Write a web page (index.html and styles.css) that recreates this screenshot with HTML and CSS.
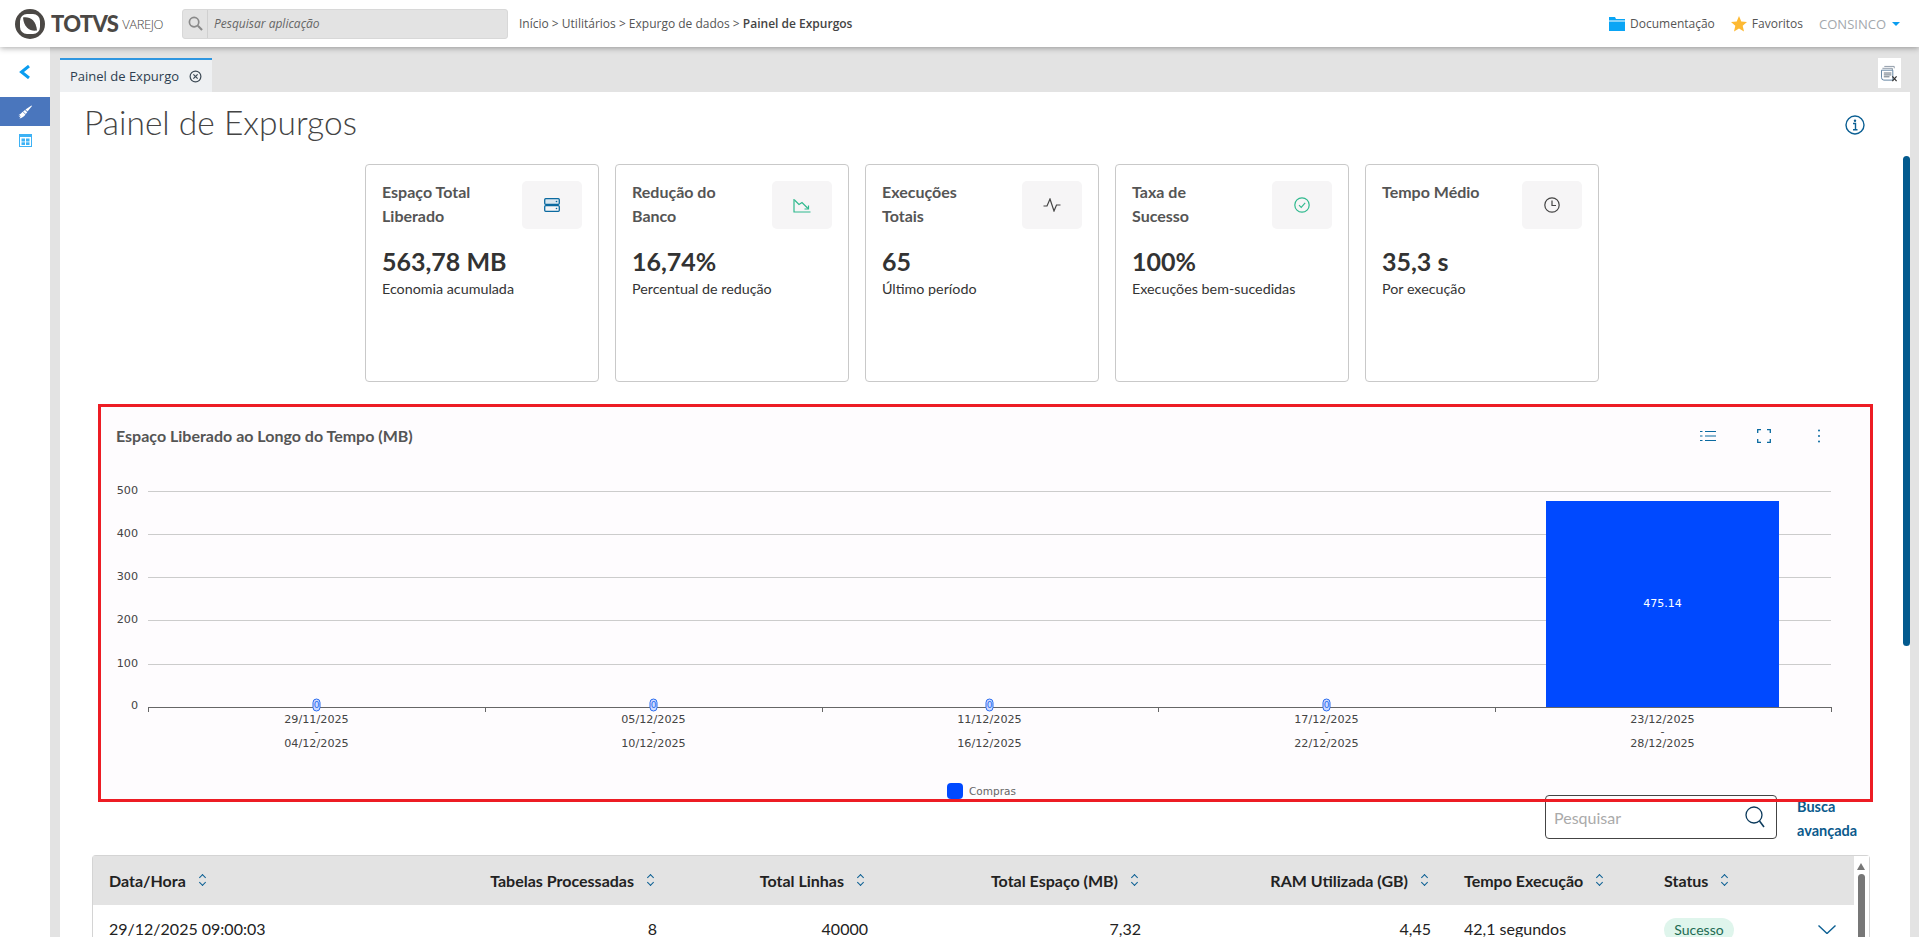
FILE: index.html
```html
<!DOCTYPE html>
<html lang="pt-BR">
<head>
<meta charset="utf-8">
<title>Painel de Expurgos</title>
<link rel="stylesheet" href="styles.css">
</head>
<body>
<header class="topbar">
  <div class="brand">
    <svg class="logo-mark" viewBox="0 0 30 30" aria-hidden="true">
      <circle cx="15" cy="15" r="15" fill="#4b4845"/>
      <rect x="5" y="5" width="20" height="20" rx="7" fill="#fff"/>
      <path d="M8 8.500 C15 7.500 21 11 22 21.500 C15 22.500 9 19 8 8.500Z" fill="#4b4845"/>
    </svg>
    <span class="brand-name">TOTVS</span>
    <span class="brand-sub">VAREJO</span>
  </div>
  <div class="app-search">
    <span class="app-search-icon">
      <svg viewBox="0 0 16 16" width="15" height="15" aria-hidden="true"><circle cx="6.500" cy="6.500" r="5" fill="none" stroke="#8a8a8a" stroke-width="1.800"/><path d="M10.500 10.500 L15 15" stroke="#8a8a8a" stroke-width="2.200"/></svg>
    </span>
    <span class="app-search-text">Pesquisar aplicação</span>
  </div>
  <nav class="crumbs">Início &gt; Utilitários &gt; Expurgo de dados &gt; <b>Painel de Expurgos</b></nav>
  <div class="top-links">
    <svg class="top-icon" viewBox="0 0 16 14" width="16" height="14" aria-hidden="true"><path d="M0 0H6L7 2H16V3.500H0Z M0 4.500H16V14H0Z" fill="#0aa5f5"/></svg>
    <span class="top-link gap-doc">Documentação</span>
    <svg class="top-icon" viewBox="0 0 16 16" width="16" height="16" aria-hidden="true"><path d="M8 0 L10.300 5.400 L16 5.900 L11.700 9.700 L13 15.500 L8 12.400 L3 15.500 L4.300 9.700 L0 5.900 L5.700 5.400Z" fill="#fdb933"/></svg>
    <span class="top-link gap-fav">Favoritos</span>
    <span class="top-user">CONSINCO</span>
    <span class="caret"></span>
  </div>
</header>

<div class="shell">
  <aside class="sidebar">
    <div class="side-back">
      <svg viewBox="0 0 12 14" width="12" height="14" aria-hidden="true"><path d="M10 1 L2.500 7 L10 13" fill="none" stroke="#0a9df0" stroke-width="3"/></svg>
    </div>
    <div class="side-item active">
      <svg viewBox="0 0 14 14" width="14" height="14" aria-hidden="true"><path d="M13.500 0.500 L14 1 L9.500 6.500 L7.500 4.500Z M7 5 L9.200 7.200 L7.800 9 L5 6.500Z M4.600 6.800 L7.500 9.400 C6 11.500 4 12.800 1.500 13.500 L2.800 11.300 L0.800 12 L2.200 10 L0.300 10.200 C2 9.500 3.500 8.300 4.600 6.800Z" fill="#fff"/></svg>
    </div>
    <div class="side-item">
      <svg viewBox="0 0 13 13" width="13" height="13" aria-hidden="true"><rect x="0" y="0" width="13" height="13" fill="#3db2f5"/><rect x="1" y="3" width="11" height="9" fill="#fff"/><rect x="2.500" y="4.500" width="3.500" height="3" fill="#3db2f5"/><rect x="7" y="4.500" width="3.500" height="3" fill="#3db2f5"/><rect x="2.500" y="8.300" width="3.500" height="2.700" fill="#3db2f5"/><rect x="7" y="8.300" width="3.500" height="2.700" fill="#3db2f5"/></svg>
    </div>
  </aside>

  <div class="workspace">
    <div class="tabbar">
      <div class="tab">
        <span>Painel de Expurgo</span>
        <svg viewBox="0 0 14 14" width="13" height="13" aria-hidden="true"><circle cx="7" cy="7" r="5.800" fill="none" stroke="#3d4a55" stroke-width="1.300"/><path d="M4.700 4.700 L9.300 9.300 M9.300 4.700 L4.700 9.300" stroke="#3d4a55" stroke-width="1.300"/></svg>
      </div>
      <div class="tab-tool">
        <svg viewBox="0 0 18 18" width="17" height="17" aria-hidden="true"><path d="M3.500 1.500H14V3.500" fill="none" stroke="#8b97a5"/><path d="M1.500 3.500H12V5.500" fill="none" stroke="#8b97a5"/><path d="M0.500 5.500H12.500V16H3 Q0.500 16 0.500 13Z" fill="none" stroke="#5c7f9f"/><path d="M3 8.500H11M3 10.500H11M3 12.500H9" stroke="#5c6a78"/><path d="M12 12 L16.500 17 M16.500 12 L12 17" stroke="#333" stroke-width="1.300"/></svg>
      </div>
    </div>

    <main class="content">
      <div class="page-head">
        <h1 class="page-title">Painel de Expurgos</h1>
        <svg viewBox="0 0 20 20" width="20" height="20" aria-hidden="true"><circle cx="10" cy="10" r="9" fill="none" stroke="#0b5f93" stroke-width="1.400"/><circle cx="10" cy="5.800" r="1.200" fill="#0b5f93"/><path d="M8 8.500H10.500V14.500M8 14.800H12.500" fill="none" stroke="#0b5f93" stroke-width="1.400"/></svg>
      </div>

      <section class="cards">
        <article class="card">
          <div class="card-head"><h2 class="card-title">Espaço Total Liberado</h2>
            <span class="card-icon"><svg viewBox="0 0 16 14" width="16" height="14" aria-hidden="true"><rect x="0.700" y="0.700" width="14.600" height="5.600" rx="1" fill="#dbe7ef" stroke="#0b6aa0" stroke-width="1.300"/><rect x="0.700" y="7.700" width="14.600" height="5.600" rx="1" fill="none" stroke="#0b6aa0" stroke-width="1.300"/><circle cx="12.500" cy="3.500" r=".8" fill="#0b6aa0"/><circle cx="12.500" cy="10.500" r=".8" fill="#0b6aa0"/></svg></span></div>
          <div class="card-value">563,78 MB</div>
          <div class="card-sub">Economia acumulada</div>
        </article>
        <article class="card">
          <div class="card-head"><h2 class="card-title">Redução do Banco</h2>
            <span class="card-icon"><svg viewBox="0 0 18 15" width="18" height="15" aria-hidden="true"><path d="M1 1V14H17.500" fill="none" stroke="#2fb98e" stroke-width="1.200"/><path d="M1.500 2 L6 6.500 L9 4.500 L15 10.500" fill="none" stroke="#2fb98e" stroke-width="1.200"/><path d="M11.500 11 H15.500 V7.500" fill="none" stroke="#2fb98e" stroke-width="1.200"/></svg></span></div>
          <div class="card-value">16,74%</div>
          <div class="card-sub">Percentual de redução</div>
        </article>
        <article class="card">
          <div class="card-head"><h2 class="card-title">Execuções Totais</h2>
            <span class="card-icon"><svg viewBox="0 0 18 14" width="18" height="14" aria-hidden="true"><path d="M0.500 8H4L7 1L11 13L13.500 7H17.500" fill="none" stroke="#444" stroke-width="1.200"/></svg></span></div>
          <div class="card-value">65</div>
          <div class="card-sub">Último período</div>
        </article>
        <article class="card">
          <div class="card-head"><h2 class="card-title">Taxa de Sucesso</h2>
            <span class="card-icon"><svg viewBox="0 0 16 16" width="16" height="16" aria-hidden="true"><circle cx="8" cy="8" r="7.200" fill="none" stroke="#2fb98e" stroke-width="1.200"/><path d="M5 8.200L7.200 10.400L11.200 5.800" fill="none" stroke="#2fb98e" stroke-width="1.100"/></svg></span></div>
          <div class="card-value">100%</div>
          <div class="card-sub">Execuções bem-sucedidas</div>
        </article>
        <article class="card">
          <div class="card-head"><h2 class="card-title">Tempo Médio</h2>
            <span class="card-icon"><svg viewBox="0 0 16 16" width="16" height="16" aria-hidden="true"><circle cx="8" cy="8" r="7.200" fill="none" stroke="#444" stroke-width="1.200"/><path d="M8 3.500V8.500H12" fill="none" stroke="#444" stroke-width="1.200"/></svg></span></div>
          <div class="card-value">35,3 s</div>
          <div class="card-sub">Por execução</div>
        </article>
      </section>

      <section class="chart-frame">
        <div class="chart-head">
          <h2 class="chart-title">Espaço Liberado ao Longo do Tempo (MB)</h2>
          <div class="chart-tools">
            <svg viewBox="0 0 16 12" width="16" height="12" aria-hidden="true"><path d="M5 1.500H16M5 6H16M5 10.500H16" stroke="#0b6aa0" stroke-width="1.200"/><path d="M0 1.500H2.500M0 6H2.500M0 10.500H2.500" stroke="#0b6aa0" stroke-width="1.200"/></svg>
            <svg viewBox="0 0 14 14" width="14" height="14" aria-hidden="true"><path d="M0.700 4V0.700H4M10 0.700H13.300V4M13.300 10V13.300H10M4 13.300H0.700V10" fill="none" stroke="#0b6aa0" stroke-width="1.300"/></svg>
            <svg class="tool-more" viewBox="0 0 4 14" width="4" height="14" aria-hidden="true"><circle cx="2" cy="1.500" r="1" fill="#0b6aa0"/><circle cx="2" cy="7" r="1" fill="#0b6aa0"/><circle cx="2" cy="12.500" r="1" fill="#0b6aa0"/></svg>
          </div>
        </div>
        <svg class="chart-svg" viewBox="0 0 1769 346" width="1769" height="346" role="img" aria-label="Espaço Liberado ao Longo do Tempo">
          <g class="grid">
            <path d="M47 23.500H1730M47 66.500H1730M47 109.500H1730M47 152.500H1730M47 196.500H1730"/>
          </g>
          <g class="y-labels">
            <text x="37" y="23">500</text><text x="37" y="66">400</text><text x="37" y="109">300</text><text x="37" y="152">200</text><text x="37" y="196">100</text><text x="37" y="238">0</text>
          </g>
          <rect class="bar" x="1445" y="33" width="233" height="206"/>
          <text class="bar-label" x="1561.500" y="136">475.14</text>
          <path class="axis" d="M47 239.500H1731M47.500 239.500V244M384.500 239.500V244M721.500 239.500V244M1057.500 239.500V244M1394.500 239.500V244M1730.500 239.500V244"/>
          <g class="zero-pills">
            <rect x="212" y="231" width="7" height="12" rx="3.500"/><rect x="549" y="231" width="7" height="12" rx="3.500"/><rect x="885" y="231" width="7" height="12" rx="3.500"/><rect x="1222" y="231" width="7" height="12" rx="3.500"/>
          </g>
          <g class="zero-text">
            <text x="215.500" y="237">0</text><text x="552.500" y="237">0</text><text x="888.500" y="237">0</text><text x="1225.500" y="237">0</text>
          </g>
          <g class="x-labels">
            <text x="215.500" y="252">29/11/2025</text><text x="215.500" y="264">-</text><text x="215.500" y="276">04/12/2025</text>
            <text x="552.500" y="252">05/12/2025</text><text x="552.500" y="264">-</text><text x="552.500" y="276">10/12/2025</text>
            <text x="888.500" y="252">11/12/2025</text><text x="888.500" y="264">-</text><text x="888.500" y="276">16/12/2025</text>
            <text x="1225.500" y="252">17/12/2025</text><text x="1225.500" y="264">-</text><text x="1225.500" y="276">22/12/2025</text>
            <text x="1561.500" y="252">23/12/2025</text><text x="1561.500" y="264">-</text><text x="1561.500" y="276">28/12/2025</text>
          </g>
        </svg>
        <div class="legend"><span class="legend-swatch"></span><span>Compras</span></div>
      </section>

      <div class="table-tools">
        <div class="table-search">
          <span>Pesquisar</span>
          <svg viewBox="0 0 20 22" width="20" height="22" aria-hidden="true"><circle cx="9" cy="9" r="8" fill="none" stroke="#0b3a5c" stroke-width="1.300"/><path d="M14.500 15 L19 21" stroke="#0b3a5c" stroke-width="1.500"/></svg>
        </div>
        <a class="adv-link">Busca avançada</a>
      </div>

      <section class="table-box">
        <div class="table-scroll">
          <div class="t-row t-head">
            <div class="c c-date">Data/Hora<i class="sort"></i></div>
            <div class="c c-tab">Tabelas Processadas<i class="sort"></i></div>
            <div class="c c-lin">Total Linhas<i class="sort"></i></div>
            <div class="c c-esp">Total Espaço (MB)<i class="sort"></i></div>
            <div class="c c-ram">RAM Utilizada (GB)<i class="sort"></i></div>
            <div class="c c-tem">Tempo Execução<i class="sort"></i></div>
            <div class="c c-sta">Status<i class="sort"></i></div>
          </div>
          <div class="t-row t-body">
            <div class="c c-date">29/12/2025 09:00:03</div>
            <div class="c c-tab num">8</div>
            <div class="c c-lin num">40000</div>
            <div class="c c-esp num">7,32</div>
            <div class="c c-ram num">4,45</div>
            <div class="c c-tem">42,1 segundos</div>
            <div class="c c-sta"><span class="badge">Sucesso</span></div>
            <svg class="row-chevron" viewBox="0 0 18 9" width="18" height="9" aria-hidden="true"><path d="M0.500 0.500L9 8.500L17.500 0.500" fill="none" stroke="#0b5f93" stroke-width="1.400"/></svg>
          </div>
        </div>
        <div class="table-bar"><span class="bar-up"></span><span class="bar-thumb"></span></div>
      </section>
    </main>
    <div class="page-scroll"></div>
  </div>
</div>
</body>
</html>
```

FILE: styles.css
```css
* { box-sizing: border-box; }
html, body { margin: 0; height: 100%; overflow: hidden; }
body { font-family: "Open Sans", "Liberation Sans", sans-serif; background: #e3e3e3; color: #333; width: 1919px; height: 937px; }

.topbar { height: 47px; background: #fff; display: flex; align-items: center; box-shadow: 0 1px 6px rgba(0,0,0,.35); position: relative; z-index: 3; padding-left: 15px; }
.brand { display: flex; align-items: center; width: 167px; flex: none; }
.logo-mark { width: 30px; height: 30px; flex: none; }
.brand-name { font-family: Lato, sans-serif; font-weight: 900; font-size: 22px; color: #4b4845; margin-left: 6px; letter-spacing: -.7px; }
.brand-sub { font-family: "Open Sans", sans-serif; font-weight: 300; font-size: 13px; color: #4b4845; margin-left: 4px; letter-spacing: -.4px; }
.app-search { width: 326px; height: 30px; background: #e3e3e3; border: 1px solid #d8d8d8; border-radius: 3px; display: flex; align-items: center; flex: none; }
.app-search-icon { width: 25px; height: 100%; border-right: 1px solid #d0d0d0; display: flex; align-items: center; justify-content: center; }
.app-search-text { font-style: italic; font-size: 12px; color: #666; margin-left: 6px; }
.crumbs { margin-left: 11px; font-size: 12px; color: #555; white-space: nowrap; }
.crumbs b { font-weight: 600; color: #444; }
.top-links { margin-left: auto; display: flex; align-items: center; padding-right: 19px; font-size: 12px; }
.top-link { color: #555; }
.gap-doc { margin: 0 16px 0 5px; }
.gap-fav { margin: 0 16px 0 5px; }
.top-user { color: #a3a8ad; font-size: 13px; }
.caret { width: 0; height: 0; border-left: 4px solid transparent; border-right: 4px solid transparent; border-top: 4px solid #0a9df0; margin-left: 6px; }

.shell { display: flex; height: 890px; }
.sidebar { width: 50px; background: #fff; flex: none; }
.side-back { height: 50px; display: flex; align-items: center; justify-content: center; }
.side-item { height: 29px; display: flex; align-items: center; justify-content: center; }
.side-item.active { background: #4a76bd; }

.workspace { margin-left: 10px; flex: 1; min-width: 0; display: flex; flex-direction: column; position: relative; padding-right: 9px; }
.tabbar { height: 45px; padding-top: 11px; display: flex; justify-content: space-between; flex: none; }
.tab { width: 152px; height: 34px; background: #eef0f2; border-top: 2px solid #2e96e0; display: flex; align-items: center; justify-content: space-between; padding: 0 10px 0 10px; font-size: 13px; color: #2d3e50; }
.tab-tool { width: 23px; height: 30px; background: #fff; margin-right: 9px; display: flex; align-items: center; justify-content: center; }

.content { flex: 1; background: #fff; position: relative; min-height: 0; overflow: hidden; }
.page-head { height: 72px; padding: 0 45px 12px 24px; display: flex; justify-content: space-between; align-items: center; }
.page-head svg { margin-top: 6px; }
.page-title { margin: 0; font-family: Lato, sans-serif; font-weight: 300; font-size: 33.500px; color: #444; }

.cards { display: flex; gap: 16px; padding-left: 305px; font-family: Lato, sans-serif; }
.card { width: 234px; height: 218px; border: 1px solid #c9c9c9; border-radius: 4px; padding: 16px; }
.card-head { display: flex; justify-content: space-between; align-items: flex-start; height: 48px; }
.card-title { margin: -1px 0 0; width: 100px; font-size: 16px; font-weight: 700; line-height: 24px; color: #555; }
.card-icon { width: 60px; height: 48px; background: #f6f5f6; border-radius: 5px; display: flex; align-items: center; justify-content: center; flex: none; }
.card-value { font-size: 25px; font-weight: 700; line-height: 32px; margin-top: 16px; color: #333; }
.card-sub { font-size: 14.300px; line-height: 22px; margin-top: 1px; color: #333; }

.chart-frame { position: relative; margin: 22px 37px 0 38px; height: 398px; background: #fefcfe; padding: 3px; }
.chart-frame::after { content: ""; position: absolute; inset: 0; border: 3px solid #ed1c24; z-index: 2; pointer-events: none; }
.chart-head { height: 84px; display: flex; justify-content: space-between; align-items: flex-start; padding: 14px 49px 0 15px; }
.chart-title { margin: 0; font-family: Lato, sans-serif; font-size: 16px; font-weight: 700; line-height: 30px; color: #555; }
.chart-tools { display: flex; gap: 41px; align-items: center; height: 30px; }
.tool-more { margin-left: 5px; }
.chart-svg { display: block; position: absolute; left: 3px; top: 64px; font-family: "DejaVu Sans", sans-serif; }
.grid path { stroke: #ccc; stroke-width: 1; fill: none; }
.y-labels text { font-size: 11.200px; fill: #444; text-anchor: end; dominant-baseline: middle; }
.x-labels text { font-size: 11.200px; fill: #444; text-anchor: middle; dominant-baseline: middle; }
.bar { fill: #0049ff; }
.bar-label { font-size: 11px; fill: #fff; text-anchor: middle; dominant-baseline: middle; }
.axis { stroke: #666; stroke-width: 1; fill: none; }
.zero-pills rect { fill: #cfdcff; stroke: #2a6cf0; stroke-width: 1; }
.zero-text text { font-size: 9px; fill: #2a6cf0; text-anchor: middle; dominant-baseline: middle; }
.legend { position: absolute; left: 849px; top: 379px; display: flex; align-items: center; gap: 6px; font-family: "DejaVu Sans", sans-serif; font-size: 10.500px; color: #666; }
.legend-swatch { width: 16px; height: 16px; background: #0049ff; border-radius: 4px; }

.table-tools { position: relative; z-index: 1; display: flex; margin-top: -7px; padding-left: 1485px; align-items: flex-start; height: 60px; }
.table-search { width: 232px; height: 44px; border: 1px solid #444; border-radius: 4px; display: flex; align-items: center; justify-content: space-between; padding: 0 11px 0 8px; font-family: Lato, sans-serif; font-size: 16px; color: #aaa; flex: none; }
.adv-link { width: 76px; margin-left: 20px; font-family: Lato, sans-serif; font-weight: 700; font-size: 14.500px; line-height: 24px; color: #0b5a8c; }

.table-box { position: relative; margin: 0 40px 0 32px; height: 200px; border: 1px solid #d4d4d4; border-bottom: 0; border-radius: 4px 4px 0 0; display: flex; font-family: Lato, sans-serif; }
.table-scroll { flex: 1; min-width: 0; }
.t-row { position: relative; height: 49px; }
.t-head { background: #e3e3e3; font-weight: 700; font-size: 16px; color: #222; }
.t-body { font-size: 16px; color: #222; }
.c { position: absolute; top: 0; height: 48px; display: flex; align-items: center; white-space: nowrap; }
.t-body .c { height: auto; top: 14px; line-height: 20px; }
.c-date { left: 16px; }
.c-tab { right: 1197px; }
.c-lin { right: 986px; }
.c-esp { right: 713px; }
.c-ram { right: 423px; }
.c-tem { left: 1371px; }
.c-sta { left: 1571px; }
.t-head .c-tab { right: 1201px; }
.t-head .c-lin { right: 991px; }
.t-head .c-esp { right: 717px; }
.t-head .c-ram { right: 427px; }
.sort { display: inline-block; width: 6px; height: 12px; margin-left: 13px; position: relative; }
.sort::before, .sort::after { content: ""; position: absolute; left: 1px; width: 4px; height: 4px; border-left: 1px solid #0b5f93; border-top: 1px solid #0b5f93; }
.sort::before { top: 1px; transform: rotate(45deg); }
.sort::after { bottom: 1px; transform: rotate(225deg); }
.badge { display: inline-block; height: 24px; line-height: 24px; width: 70px; text-align: center; background: #dff5ec; color: #1d6b52; border-radius: 12px; font-size: 14px; }
.t-body .c-sta { top: 13px; }
.row-chevron { position: absolute; left: 1725px; top: 20px; }
.table-bar { width: 15px; flex: none; background: #fff; position: relative; }
.bar-up { position: absolute; left: 3px; top: 7px; width: 0; height: 0; border-left: 4px solid transparent; border-right: 4px solid transparent; border-bottom: 7px solid #777; }
.bar-thumb { position: absolute; left: 4px; top: 18px; width: 7px; height: 180px; background: #777; border-radius: 4px 4px 0 0; }

.page-scroll { position: absolute; right: 9px; top: 109px; width: 7px; height: 490px; background: #035a8e; border-radius: 4px; z-index: 2; }
```
